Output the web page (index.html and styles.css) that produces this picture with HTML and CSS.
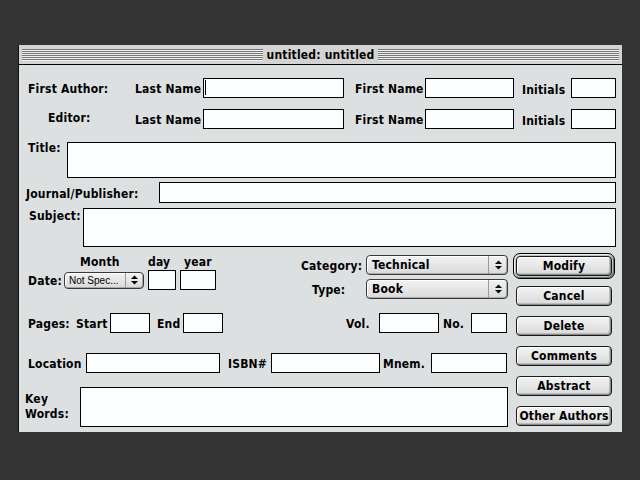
FILE: index.html
```html
<!DOCTYPE html>
<html>
<head>
<meta charset="utf-8">
<link rel="stylesheet" href="styles.css">
</head>
<body>
<div class="window">
  <div class="titlebar"><span class="stripes"></span><span class="title">untitled: untitled</span><span class="stripes"></span></div>
  <div class="content">
    <div class="row r1">
      <span class="lbl l-author">First Author:</span>
      <span class="lbl l-last">Last Name</span>
      <span class="field f-last"><span class="caret"></span></span>
      <span class="lbl l-first">First Name</span>
      <span class="field f-first"></span>
      <span class="lbl l-init">Initials</span>
      <span class="field f-init"></span>
    </div>
    <div class="row r2">
      <span class="lbl l-author l-editor">Editor:</span>
      <span class="lbl l-last">Last Name</span>
      <span class="field f-last"></span>
      <span class="lbl l-first">First Name</span>
      <span class="field f-first"></span>
      <span class="lbl l-init">Initials</span>
      <span class="field f-init"></span>
    </div>
    <div class="row r3">
      <span class="lbl l-title">Title:</span>
      <span class="field f-title"></span>
    </div>
    <div class="row r4">
      <span class="lbl l-journal">Journal/Publisher:</span>
      <span class="field f-journal"></span>
    </div>
    <div class="row r5">
      <span class="lbl l-subject">Subject:</span>
      <span class="field f-subject"></span>
    </div>
    <div class="lower">
      <div class="left">
        <div class="dateblock">
          <div class="dategroup">
            <div class="datehead">
              <span class="h-month">Month</span>
              <span class="h-day">day</span>
              <span class="h-year">year</span>
            </div>
            <div class="row daterow">
              <span class="lbl l-date">Date:</span>
              <span class="popup popup-sm"><span class="ptext">Not Spec...</span><span class="parrow"><svg width="7" height="10" viewBox="0 0 7 10"><polygon points="0,4 3.5,0.5 7,4" fill="#000"/><polygon points="0,6 3.5,9.5 7,6" fill="#000"/></svg></span></span>
              <span class="field f-day"></span>
              <span class="field f-year"></span>
            </div>
          </div>
          <div class="catgroup">
            <div class="row catrow">
              <span class="lbl l-cat">Category:</span>
              <span class="popup popup-lg"><span class="ptext">Technical</span><span class="parrow"><svg width="7" height="10" viewBox="0 0 7 10"><polygon points="0,4 3.5,0.5 7,4" fill="#000"/><polygon points="0,6 3.5,9.5 7,6" fill="#000"/></svg></span></span>
            </div>
            <div class="row typerow">
              <span class="lbl l-type">Type:</span>
              <span class="popup popup-lg"><span class="ptext">Book</span><span class="parrow"><svg width="7" height="10" viewBox="0 0 7 10"><polygon points="0,4 3.5,0.5 7,4" fill="#000"/><polygon points="0,6 3.5,9.5 7,6" fill="#000"/></svg></span></span>
            </div>
          </div>
        </div>
        <div class="row pagesrow">
          <span class="lbl l-pages">Pages:</span>
          <span class="lbl l-start">Start</span>
          <span class="field f-page"></span>
          <span class="lbl l-end">End</span>
          <span class="field f-page"></span>
          <span class="lbl l-vol">Vol.</span>
          <span class="field f-vol"></span>
          <span class="lbl l-no">No.</span>
          <span class="field f-no"></span>
        </div>
        <div class="row locrow">
          <span class="lbl l-loc">Location</span>
          <span class="field f-loc"></span>
          <span class="lbl l-isbn">ISBN#</span>
          <span class="field f-isbn"></span>
          <span class="lbl l-mnem">Mnem.</span>
          <span class="field f-mnem"></span>
        </div>
        <div class="row keyrow">
          <span class="lbl l-key">Key<br>Words:</span>
          <span class="field f-key"></span>
        </div>
      </div>
      <div class="right">
        <div class="ring"><div class="btn">Modify</div></div>
        <div class="btn btn-first">Cancel</div>
        <div class="btn">Delete</div>
        <div class="btn">Comments</div>
        <div class="btn">Abstract</div>
        <div class="btn">Other Authors</div>
      </div>
    </div>
  </div>
</div>
</body>
</html>
```

FILE: styles.css
```css
* { box-sizing: border-box; }

body {
  margin: 0;
  background: #333333;
  font-family: "DejaVu Sans Condensed", "DejaVu Sans", sans-serif;
  font-weight: bold;
  font-size: 12px;
  letter-spacing: 0.2px;
  color: #000;
  height: 480px;
}

.window {
  margin: 45px 0 0 18px;
  width: 604px;
  border-left: 1px solid #111;
}

.titlebar {
  height: 20px;
  background: #d3d3d3;
  border-bottom: 1px solid #000;
  display: flex;
  align-items: center;
  padding: 0 3px 0 3px;
}

.stripes {
  flex: 1;
  height: 12px;
  background: repeating-linear-gradient(to bottom, #777 0 1px, #f0f0f0 1px 2px);
}

.title {
  padding: 0 4px;
  line-height: 14px;
}

.content {
  height: 367px;
  background: #dde0e0;
  padding-top: 13px;
}

.row {
  display: flex;
  align-items: center;
}

.lbl {
  flex: none;
  white-space: nowrap;
  line-height: 14px;
  padding-top: 2px;
}

.field {
  flex: none;
  display: block;
  position: relative;
  background: #fdfefe;
  border: 1px solid #000;
}

.caret {
  position: absolute;
  left: 1px;
  top: 1px;
  width: 1px;
  height: 15px;
  background: #000;
}

/* author rows */
.r1, .r2 { height: 20px; }
.r2 { margin-top: 11px; }
.r1 .field, .r2 .field { height: 20px; }
.l-author { width: 116px; padding-left: 9px; }
.l-editor { padding-left: 29px; margin-bottom: 5px; }
.l-last { width: 68px; }
.f-last { width: 141px; }
.l-first { width: 81px; padding-left: 11px; }
.f-first { width: 89px; }
.l-init { width: 57px; padding-left: 8px; margin-top: 2px; }
.f-init { width: 45px; }

/* title, journal, subject */
.r3 { margin-top: 13px; align-items: flex-start; }
.l-title { width: 48px; padding-left: 9px; margin-top: -3px; }
.f-title { width: 549px; height: 36px; }

.r4 { margin-top: 4px; }
.l-journal { width: 140px; padding-left: 7px; }
.f-journal { width: 457px; height: 21px; }

.r5 { margin-top: 5px; align-items: flex-start; }
.l-subject { width: 64px; padding-left: 10px; margin-top: -1px; }
.f-subject { width: 533px; height: 39px; }

/* lower part */
.lower { display: flex; }
.left { width: 494px; flex: none; }
.right { width: 102px; flex: none; padding-top: 6px; }

.dateblock {
  display: flex;
  align-items: flex-start;
  height: 52px;
}

.dategroup { width: 197px; flex: none; margin-top: 7px; }
.datehead { display: flex; height: 14px; line-height: 14px; padding-top: 1px; }
.h-month { width: 129px; padding-left: 61px; }
.h-day { width: 36px; }

.daterow { margin-top: 2px; height: 20px; }
.l-date { width: 45px; padding-left: 9px; }
.f-day { width: 28px; height: 20px; margin-left: 4px; }
.f-year { width: 36px; height: 20px; margin-left: 4px; }

.catgroup { margin-left: 84px; margin-top: 8px; }
.catrow { height: 20px; }
.typerow { height: 20px; margin-top: 4px; }
.l-cat { width: 66px; padding-left: 1px; }
.l-type { width: 66px; padding-left: 12px; }

.popup {
  flex: none;
  display: flex;
  align-items: stretch;
  border: 1px solid #3a3a3a;
  border-radius: 4px;
  background: linear-gradient(#f2f2f2, #dadada);
  box-shadow: inset 1px 1px 0 #fff, inset -1px -1px 0 #a8a8a8;
}

.popup .ptext {
  flex: 1;
  display: flex;
  align-items: center;
}

.popup .parrow {
  flex: none;
  display: flex;
  align-items: center;
  justify-content: center;
  border-left: 1px solid #9a9a9a;
}

.popup-sm { width: 80px; height: 17px; }
.popup-sm .ptext {
  font-family: "Liberation Sans", Arial, sans-serif;
  font-weight: normal;
  font-size: 10px;
  letter-spacing: 0;
  padding-left: 4px;
}
.popup-sm .parrow { width: 18px; }

.popup-lg { width: 142px; height: 20px; }
.popup-lg .ptext { padding-left: 5px; }
.popup-lg .parrow { width: 19px; }

.pagesrow { margin-top: 14px; height: 20px; }
.pagesrow .field { height: 20px; }
.l-pages { width: 57px; padding-left: 9px; }
.l-start { width: 34px; }
.f-page { width: 40px; }
.l-end { width: 33px; padding-left: 7px; }
.l-vol { width: 156px; padding-left: 123px; }
.f-vol { width: 60px; }
.l-no { width: 32px; padding-left: 4px; }
.f-no { width: 36px; }

.locrow { margin-top: 20px; height: 20px; }
.locrow .field { height: 20px; }
.l-loc { width: 67px; padding-left: 9px; }
.f-loc { width: 134px; }
.l-isbn { width: 51px; padding-left: 8px; }
.f-isbn { width: 109px; }
.l-mnem { width: 51px; padding-left: 3px; }
.f-mnem { width: 76px; }

.keyrow { margin-top: 14px; height: 40px; }
.l-key { width: 61px; padding-left: 6px; padding-top: 0; line-height: 15px; }
.f-key { width: 428px; height: 40px; }

/* buttons */
.ring {
  width: 102px;
  height: 26px;
  border: 1px solid #000;
  border-radius: 7px;
  padding: 2px;
  background: #bdbdbd;
  box-shadow: inset 1px 1px 0 #eee, inset -1px -1px 0 #777;
}

.btn {
  width: 96px;
  height: 20px;
  margin-left: 3px;
  margin-top: 10px;
  border: 1px solid #1a1a1a;
  border-radius: 4px;
  background: linear-gradient(#f3f3f3, #d9d9d9);
  box-shadow: inset 1px 1px 0 #fff, inset -1px -1px 0 #8a8a8a, inset -2px -2px 0 #bcbcbc;
  text-align: center;
  line-height: 18px;
}

.ring .btn { margin: 0; }
.btn-first { margin-top: 7px; }
```
